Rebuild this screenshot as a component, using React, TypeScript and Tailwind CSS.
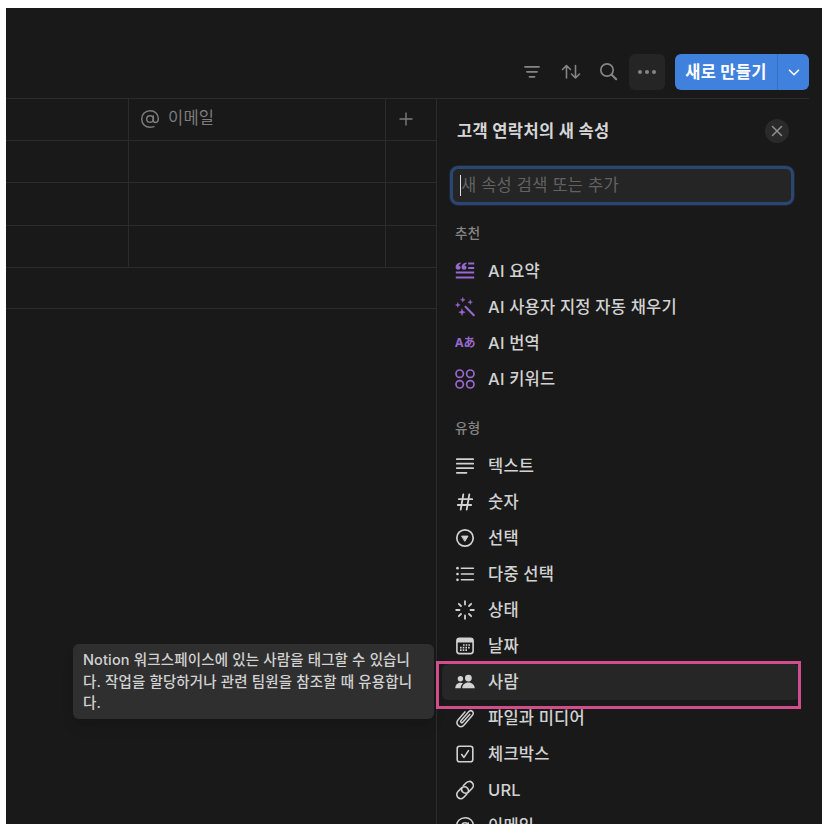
import React from "react";

type Row = { label: string; icon: React.ReactNode; active?: boolean };

const Svg = ({ children, sw = 1.5 }: { children: React.ReactNode; sw?: number }) => (
  <svg width="20" height="20" viewBox="0 0 20 20" fill="none" stroke="currentColor" strokeWidth={sw} strokeLinecap="round" strokeLinejoin="round">
    {children}
  </svg>
);

const AtIcon = () => (
  <Svg>
    <circle cx="10" cy="10" r="3.3" />
    <path d="M13.3 6.9v4.4c0 1.4.8 2.1 2 2.1 1.8 0 3-1.500 3-3.700C18.300 5 15 1.700 10.200 1.700 5.300 1.700 1.700 5.200 1.700 10s3.500 8.300 8.400 8.300c1.500 0 2.700-.2 3.800-.7" />
  </Svg>
);

const star = (x: number, y: number, r: number) => (
  <path
    key={`${x}-${y}`}
    d={`M${x} ${y - r}l${r * 0.28} ${r * 0.72}l${r * 0.72} ${r * 0.28}l${-r * 0.72} ${r * 0.28}l${-r * 0.28} ${r * 0.72}l${-r * 0.28} ${-r * 0.72}l${-r * 0.72} ${-r * 0.28}l${r * 0.72} ${-r * 0.28}z`}
    fill="currentColor"
    strokeWidth="0.4"
  />
);

const suggested: Row[] = [
  {
    label: "AI 요약",
    icon: (
      <Svg sw={2}>
        <g fill="currentColor" stroke="none">
          <path d="M5.600 1.500C2.600 1.900.6 3.600.6 6.100c0 1.700 1 2.700 2.500 2.700s2.500-1 2.500-2.300c0-1.200-.8-2-2-2.100.3-.8 1-1.200 2-1.500z" />
          <path d="M11.500 1.500C8.500 1.900 6.500 3.600 6.500 6.100c0 1.700 1 2.700 2.500 2.700s2.500-1 2.500-2.300c0-1.200-.8-2-2-2.100.3-.8 1-1.200 2-1.500z" />
        </g>
        <path d="M13.200 2.500h6M13.200 6.900h6M.8 11.500h18.400M.8 16.500h18.400" strokeLinecap="butt" />
      </Svg>
    ),
  },
  {
    label: "AI 사용자 지정 자동 채우기",
    icon: (
      <Svg sw={2}>
        <path d="M10.500 9.800l8.300 8.400" />
        {star(7.800, 2.800, 2.300)}
        {star(2.800, 8, 2.300)}
        {star(15.200, 5.200, 2.300)}
        {star(7, 15.200, 3.300)}
      </Svg>
    ),
  },
  {
    label: "AI 번역",
    icon: <span className="text-[12px] font-bold leading-[20px] tracking-[-0.1px] whitespace-nowrap">Aあ</span>,
  },
  {
    label: "AI 키워드",
    icon: (
      <Svg sw={1.7}>
        <circle cx="4.700" cy="4.700" r="3.700" />
        <circle cx="15.300" cy="4.700" r="3.700" />
        <circle cx="4.700" cy="15.300" r="3.700" />
        <circle cx="15.300" cy="15.300" r="3.700" />
      </Svg>
    ),
  },
];

const types: Row[] = [
  { label: "텍스트", icon: <Svg sw={1.7}><path d="M1.800 3.200h16.400M1.800 7.700h16.400M1.800 12.200h16.400M1.800 16.800h9.700" /></Svg> },
  { label: "숫자", icon: <Svg sw={1.8}><path d="M8.300 2.500L5.700 17.700M14.300 2.500L11.700 17.700M3.800 7.200h13.400M2.800 13h13.400" /></Svg> },
  {
    label: "선택",
    icon: (
      <Svg sw={1.7}>
        <circle cx="10" cy="10" r="8.200" />
        <path d="M7 8.100h6L10 13z" fill="currentColor" strokeWidth="1" />
      </Svg>
    ),
  },
  {
    label: "다중 선택",
    icon: (
      <Svg sw={1.6}>
        <path d="M6.400 4.200h12M6.400 10h12M6.400 15.800h12" />
        <g fill="currentColor" stroke="none">
          <circle cx="2.500" cy="4.200" r="1.350" /><circle cx="2.500" cy="10" r="1.350" /><circle cx="2.500" cy="15.800" r="1.350" />
        </g>
      </Svg>
    ),
  },
  { label: "상태", icon: <Svg sw={1.8}><path d="M10 1.200v3.300M10 15.500v3.300M1.200 10h3.300M15.500 10h3.300M3.800 3.800l2.200 2.200M14 14l2.200 2.200M3.800 16.200L6 14M14 6l2.200-2.200" /></Svg> },
  {
    label: "날짜",
    icon: (
      <Svg sw={1.6}>
        <rect x="1.900" y="2.200" width="16.200" height="15.400" rx="2.600" />
        <path d="M2 4.300h16M2 5.400h16" strokeWidth="2.400" strokeLinecap="butt" />
        <path d="M8 9h7.500M5 11.600h10.500M5 14.200h7.800" strokeWidth="1.700" strokeDasharray="1.600 1.100" strokeLinecap="butt" />
      </Svg>
    ),
  },
  {
    label: "사람",
    active: true,
    icon: (
      <Svg>
        <g fill="currentColor" stroke="none">
          <circle cx="5.400" cy="6.800" r="2.700" />
          <circle cx="13.400" cy="6.100" r="3.400" />
          <path d="M7.200 16.300c0-3.200 2.500-5.700 6.200-5.700s6.300 2.500 6.300 5.700z" />
          <path d="M.3 16.300c0-3.300 2-5.600 5.100-5.600 1 0 1.900.2 2.600.7-1.600 1.200-2.300 2.800-2.300 4.900z" />
        </g>
      </Svg>
    ),
  },
  {
    label: "파일과 미디어",
    icon: (
      <Svg>
        <path d="M14.600 5.900l-6.800 7.900c-.6.700-1.400.7-1.900.3-.6-.5-.6-1.300 0-2l7.300-8.500c1.200-1.400 2.900-1.500 4-.6s1.200 2.600 0 4l-8.100 9.500c-1.700 2-4.200 2.200-5.900.8-1.700-1.500-1.800-3.900-.2-5.800l6.700-7.900" transform="translate(0.200 0.300)" />
      </Svg>
    ),
  },
  { label: "체크박스", icon: <Svg sw={1.6}><rect x="2.200" y="2.200" width="15.600" height="15.600" rx="2.300" /><path d="M6.700 10.500l2.300 2.900 4.500-6.800" /></Svg> },
  {
    label: "URL",
    icon: (
      <Svg sw={1.600}>
        <path d="M8.300 5.700l2.900-2.900c1.800-1.800 4.300-1.800 5.900-.2s1.600 4.200-.1 5.900l-3.400 3.400c-1.700 1.700-4.300 1.700-5.900.1-1.200-1.200-1.500-3-.8-4.500" />
        <path d="M11.700 14.300l-2.900 2.900c-1.800 1.800-4.300 1.800-5.900.2s-1.600-4.200.1-5.900l3.400-3.400c1.700-1.700 4.300-1.700 5.900-.1 1.200 1.200 1.500 3 .8 4.500" />
      </Svg>
    ),
  },
  { label: "이메일", icon: <AtIcon /> },
];

const List = ({ rows, accent }: { rows: Row[]; accent?: boolean }) => (
  <ul>
    {rows.map((r) => (
      <li
        key={r.label}
        className={`flex h-9 items-center rounded-md pl-[13px] text-[16.5px] font-medium tracking-[0.2px] text-[#d2d2d2] ${r.active ? "bg-[#262626]" : ""}`}
      >
        <span className={`flex size-5 shrink-0 items-center justify-center ${accent ? "text-[#9868cf]" : ""}`}>{r.icon}</span>
        <span className="ml-[13px] leading-none whitespace-nowrap">{r.label}</span>
      </li>
    ))}
  </ul>
);

export default function App() {
  return (
    <div className="h-[833px] w-[828px] overflow-hidden bg-white pt-2 pl-1.5 font-['Inter','Noto_Sans_CJK_KR',sans-serif]">
      <div className="relative flex h-[816px] w-[816px] flex-col overflow-hidden bg-[#191919]">
        <header className="mr-[13px] flex h-[91px] shrink-0 items-end justify-end border-b border-[#2b2b2b] pb-2 text-[#858585]">
          <div className="flex h-9 items-center">
            <svg className="mr-[19px]" width="20" height="20" viewBox="0 0 20 20" stroke="currentColor" strokeWidth="1.800" strokeLinecap="round">
              <path d="M3 4.800h14M5 9.800h10M7.500 14.800h5" />
            </svg>
            <svg className="mr-[18px]" width="20" height="20" viewBox="0 0 20 20" fill="none" stroke="currentColor" strokeWidth="1.600" strokeLinecap="round" strokeLinejoin="round">
              <path d="M5.500 16V3.500M1.500 7.500l4-4 4 4M14.500 3.500V16M10.500 12l4 4 4-4" />
            </svg>
            <svg className="mr-[10px]" width="20" height="20" viewBox="0 0 20 20" fill="none" stroke="currentColor" strokeWidth="1.700" strokeLinecap="round">
              <circle cx="8" cy="8" r="6.200" />
              <path d="M12.700 12.700l4.500 4.500" strokeWidth="2.100" />
            </svg>
            <div className="mr-[10px] flex h-9 w-9 items-center justify-center gap-[3px] rounded-md bg-[#252525]">
              <i className="size-1 rounded-full bg-[#858585]" />
              <i className="size-1 rounded-full bg-[#858585]" />
              <i className="size-1 rounded-full bg-[#858585]" />
            </div>
            <div className="flex h-9 w-[134px] overflow-hidden rounded-md bg-[#4181de] text-white">
              <span className="flex w-[103px] items-center justify-center border-r border-[#3870c0] text-[16.5px] leading-none font-bold tracking-[0.300px] whitespace-nowrap">새로 만들기</span>
              <span className="flex flex-1 items-center justify-center">
                <svg width="12" height="12" viewBox="0 0 12 12" fill="none" stroke="currentColor" strokeWidth="1.600" strokeLinecap="round" strokeLinejoin="round"><path d="M1.500 4.200L6 8.700l4.500-4.500" /></svg>
              </span>
            </div>
          </div>
        </header>

        <div className="flex min-h-0 flex-1">
          <div className="w-[430px] shrink-0 text-[#7c7c7c]">
            <div className="flex h-[42px] border-b border-[#2b2b2b]">
              <div className="w-[123px] border-r border-[#2b2b2b]" />
              <div className="flex w-[257px] items-center border-r border-[#2b2b2b] pb-[2px] pl-[11px] text-[16.5px] tracking-[0.200px]">
                <AtIcon />
                <span className="ml-2 leading-none">이메일</span>
              </div>
              <div className="flex flex-1 items-center pb-[2px] pl-[12px]">
                <svg width="16" height="16" viewBox="0 0 16 16" stroke="currentColor" strokeWidth="1.400"><path d="M8 1.500v13M1.500 8h13" /></svg>
              </div>
            </div>
            {["h-[42px]", "h-[43px]", "h-[42px]"].map((h, i) => (
              <div key={i} className={`flex border-b border-[#2b2b2b] ${h}`}>
                <div className="w-[123px] border-r border-[#2b2b2b]" />
                <div className="w-[257px] border-r border-[#2b2b2b]" />
              </div>
            ))}
            <div className="h-[41px] border-b border-[#2b2b2b]" />
          </div>

          <aside className="flex-1 border-l border-[#2b2b2b] pr-[22px] pl-[5px]">
            <div className="flex h-16 items-center justify-between pr-[11px] pl-[15px]">
              <h2 className="text-[16.5px] leading-none font-bold tracking-[0.350px] text-[#d6d6d6]">고객 연락처의 새 속성</h2>
              <span className="flex size-6 items-center justify-center rounded-full bg-[#2a2a2a] text-[#909090]">
                <svg width="12" height="12" viewBox="0 0 12 12" stroke="currentColor" strokeWidth="1.500" strokeLinecap="round"><path d="M1.500 1.500l9 9M10.500 1.500l-9 9" /></svg>
              </span>
            </div>
            <div className="mt-[3px] ml-[8px] flex h-[39px] w-[344px] items-center rounded-lg border-[3px] border-[#2b4670] bg-[#252525] pl-[7px] ring-1 ring-[#213655]/50">
              <span className="h-[21px] w-px shrink-0 bg-[#e0e0e0]" />
              <span className="text-[16.5px] leading-none tracking-[0.200px] whitespace-nowrap text-[#626262]">새 속성 검색 또는 추가</span>
            </div>
            <div className="mt-[20px] mb-[12px] pl-[13px] text-[13.5px] leading-[16px] font-medium tracking-[0.300px] text-[#858585]">추천</div>
            <List rows={suggested} accent />
            <div className="mt-[23px] mb-[12px] pl-[13px] text-[13.5px] leading-[16px] font-medium tracking-[0.300px] text-[#858585]">유형</div>
            <List rows={types} />
          </aside>
        </div>

        <div className="absolute top-[636px] left-[67px] h-[75px] w-[361px] rounded-md bg-[#2f2f2f] pt-[5px] pl-[10px] text-[14.5px] leading-[21.500px] font-medium tracking-[0.150px] text-[#d2d2d2] shadow-lg">
          <p className="whitespace-nowrap">Notion 워크스페이스에 있는 사람을 태그할 수 있습니</p>
          <p className="whitespace-nowrap">다. 작업을 할당하거나 관련 팀원을 참조할 때 유용합니</p>
          <p>다.</p>
        </div>
        <div className="absolute top-[653px] left-[430px] h-[48px] w-[365px] border-[3px] border-[#d14d8c]" />
      </div>
    </div>
  );
}
